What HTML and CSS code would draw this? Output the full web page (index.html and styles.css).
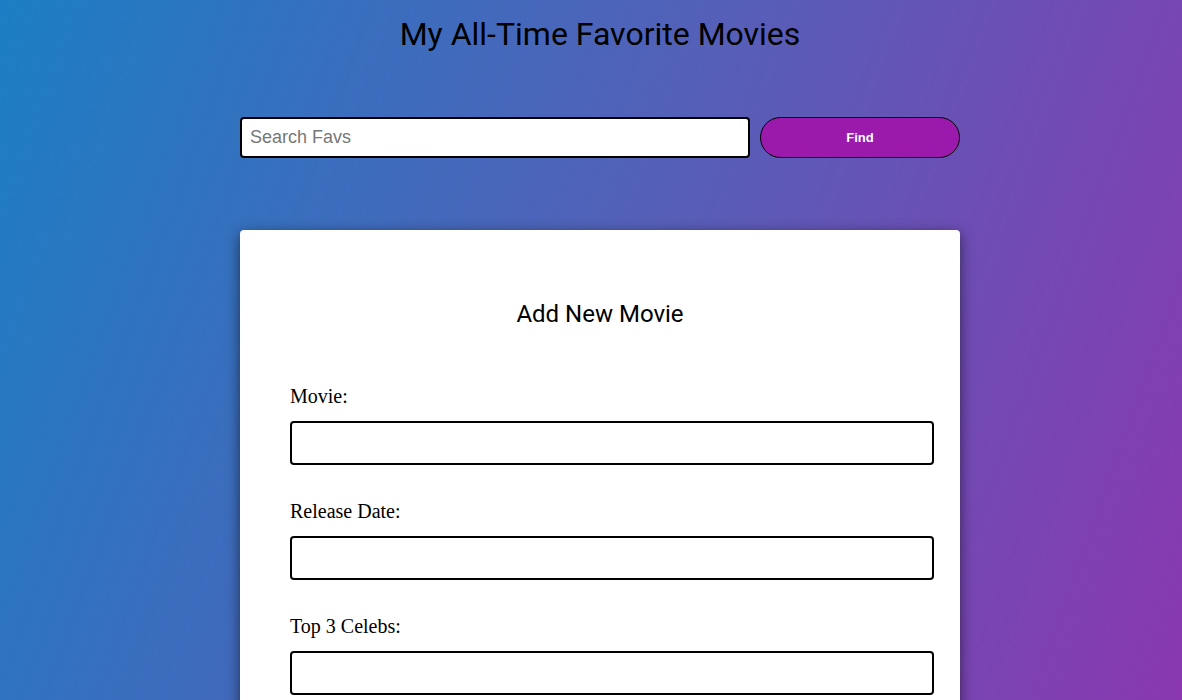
FILE: index.html
```html
<!DOCTYPE html>
<html>
<head>
<meta charset="utf-8">
<link rel="stylesheet" href="styles.css">
</head>
<body>
<div class="page">
  <h1 class="title">My All-Time Favorite Movies</h1>
  <div class="search">
    <input class="search-input" type="text" placeholder="Search Favs">
    <button class="find-btn">Find</button>
  </div>
  <div class="card">
    <h2 class="card-title">Add New Movie</h2>
    <div class="field">
      <label class="label">Movie:</label>
      <input class="text-input" type="text">
    </div>
    <div class="field">
      <label class="label">Release Date:</label>
      <input class="text-input" type="text">
    </div>
    <div class="field">
      <label class="label">Top 3 Celebs:</label>
      <input class="text-input" type="text">
    </div>
  </div>
</div>
</body>
</html>
```
FILE: styles.css
```css
html, body {
  margin: 0;
  height: 100%;
  overflow: hidden;
}
body {
  background: linear-gradient(110deg, #1c7ec4 0%, #5460b8 50%, #8a38b0 100%);
  padding-left: 18px;
}
.page {
  width: 720px;
  margin: 0 auto;
}
.title {
  margin: 0;
  padding-top: 14px;
  text-align: center;
  font-family: Roboto, sans-serif;
  font-weight: 400;
  font-size: 32px;
  line-height: 40px;
  color: #000;
}
.search {
  display: flex;
  gap: 10px;
  margin-top: 63px;
}
.search-input {
  box-sizing: border-box;
  width: 510px;
  height: 41px;
  border: 2px solid #000;
  border-radius: 4px;
  padding: 0 8px;
  font-family: "Liberation Sans", Arial, sans-serif;
  font-size: 18px;
  outline: none;
}
.search-input::placeholder {
  color: #777;
}
.find-btn {
  box-sizing: border-box;
  width: 200px;
  height: 41px;
  background: #9b19ab;
  border: 1px solid #000;
  border-radius: 21px;
  color: #fff;
  font-family: "Liberation Sans", Arial, sans-serif;
  font-weight: bold;
  font-size: 13px;
}
.card {
  margin-top: 72px;
  background: #fff;
  border-radius: 4px;
  box-shadow: 0 4px 14px rgba(0, 0, 0, 0.55);
  padding: 69px 50px 0 50px;
  height: 480px;
}
.card-title {
  margin: 0 0 55px;
  text-align: center;
  font-family: Roboto, sans-serif;
  font-weight: 400;
  font-size: 24px;
  line-height: 30px;
  color: #000;
}
.field {
  display: flex;
  flex-direction: column;
  align-items: flex-start;
  margin-bottom: 34px;
}
.label {
  font-family: "Liberation Serif", "Times New Roman", serif;
  font-size: 20px;
  line-height: 24px;
  margin-bottom: 13px;
}
.text-input {
  box-sizing: border-box;
  width: 644px;
  height: 44px;
  border: 2px solid #000;
  border-radius: 4px;
  outline: none;
}
```
